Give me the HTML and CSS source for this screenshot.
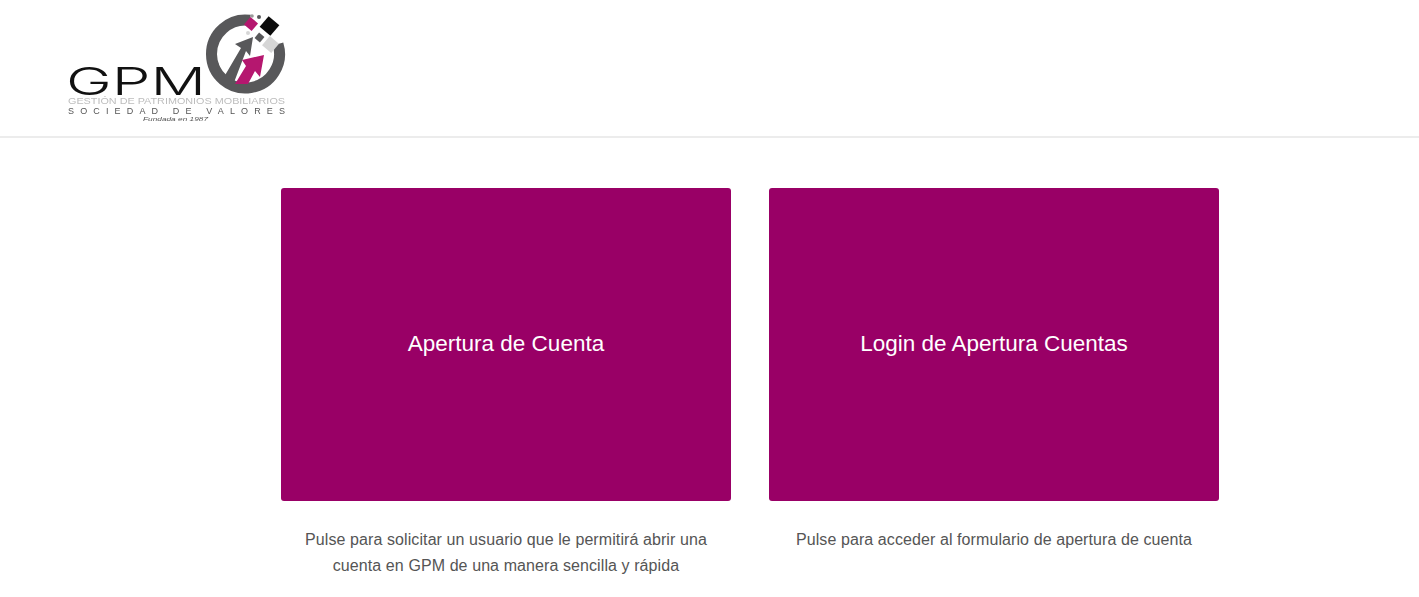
FILE: index.html
```html
<!DOCTYPE html>
<html lang="es">
<head>
<meta charset="UTF-8">
<meta name="viewport" content="width=device-width, initial-scale=1.0">
<title>GPM - Apertura de Cuenta</title>
<link rel="stylesheet" href="styles.css">
</head>
<body>

<header class="site-header">
    <!-- logo drawn in page coordinates, 60..290 x 10..125 -->
    <svg class="logo" viewBox="60 10 230 115" width="230" height="115" role="img" aria-label="GPM">
        <path class="logo-ring" d="M250 20.300 A34 34 0 1 0 278 44"/>
        <path fill="#58585a" d="M216 58 L224 77 L241 48 L235 44 L253 37 L250 56 L246 51 L233 85 L220 84 Z"/>
        <path fill="#b5176f" d="M235 84 L246 66 L242 60 L264 55 L260 77 L255 71 L248 84 Z"/>
        <rect x="246" y="19" width="10" height="10" fill="#b5176f" transform="rotate(40 251 24)"/>
        <rect x="262.500" y="19" width="14" height="14" fill="#0c0c0c" transform="rotate(40 269.500 26)"/>
        <rect x="256" y="34" width="7" height="7" fill="#58585a" transform="rotate(40 259.500 37.500)"/>
        <rect x="264.500" y="38.500" width="12" height="12" fill="#d6d6d6" transform="rotate(40 270.500 44.500)"/>
        <circle cx="248" cy="33" r="2" fill="#d6d6d6"/>
        <circle cx="252" cy="16" r="1.800" fill="#9a9a9a"/>
        <circle cx="259" cy="17" r="2" fill="#58585a"/>
        <text class="logo-gpm" x="66" y="95" textLength="140" lengthAdjust="spacingAndGlyphs">GPM</text>
        <text class="logo-line1" x="68" y="104" textLength="217" lengthAdjust="spacingAndGlyphs">GESTIÓN DE PATRIMONIOS MOBILIARIOS</text>
        <text class="logo-line2" x="68" y="114" textLength="217">SOCIEDAD DE VALORES</text>
        <text class="logo-line3" x="143" y="121" textLength="65" lengthAdjust="spacingAndGlyphs">Fundada en 1987</text>
    </svg>
</header>

<main class="options">
    <section class="option">
        <a class="option-card" href="#">Apertura de Cuenta</a>
        <p class="option-text">Pulse para solicitar un usuario que le permitirá abrir una cuenta en GPM de una manera sencilla y rápida</p>
    </section>
    <section class="option">
        <a class="option-card" href="#">Login de Apertura Cuentas</a>
        <p class="option-text">Pulse para acceder al formulario de apertura de cuenta</p>
    </section>
</main>

</body>
</html>
```

FILE: styles.css
```css
body {
    margin: 0;
    background-color: #fff;
    font-family: "Liberation Sans", Arial, sans-serif;
    color: #555;
}

.site-header {
    height: 138px;
    box-sizing: border-box;
    padding: 10px 0 0 60px;
    border-bottom: 2px solid #ececec;
}

.logo {
    display: block;
    filter: blur(0.5px);
}

.logo-ring {
    fill: none;
    stroke: #58585a;
    stroke-width: 11;
}

.logo-gpm {
    font-family: Inter, "Liberation Sans", sans-serif;
    font-size: 38.500px;
    font-weight: 300;
    fill: #111;
}

.logo-line1 {
    font-size: 9.500px;
    fill: #bdbdbd;
}

.logo-line2 {
    font-size: 9px;
    fill: #555;
}

.logo-line3 {
    font-size: 5px;
    font-style: italic;
    fill: #555;
}

.options {
    display: flex;
    gap: 38px;
    padding: 50px 0 0 281px;
}

.option {
    width: 450px;
}

.option-card {
    display: flex;
    justify-content: center;
    align-items: center;
    height: 313px;
    padding-bottom: 2px;
    box-sizing: border-box;
    border-radius: 3px;
    background-color: #990066;
    color: #fff;
    font-size: 22.500px;
    text-decoration: none;
}

.option-text {
    margin: 26px 20px 0;
    font-size: 16px;
    line-height: 26px;
    letter-spacing: 0.090px;
    text-align: center;
}
```
